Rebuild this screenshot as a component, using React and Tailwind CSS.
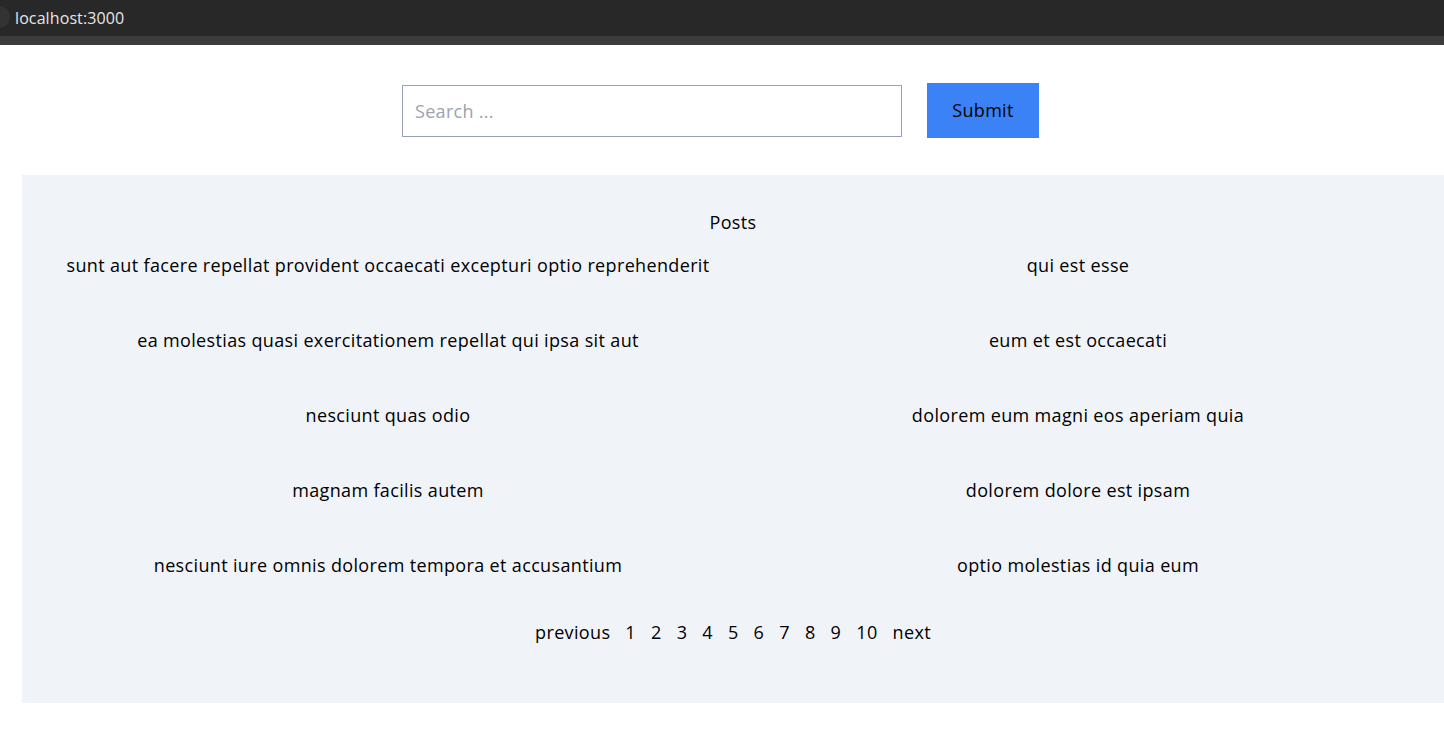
import React from "react";

const posts = [
  "sunt aut facere repellat provident occaecati excepturi optio reprehenderit",
  "qui est esse",
  "ea molestias quasi exercitationem repellat qui ipsa sit aut",
  "eum et est occaecati",
  "nesciunt quas odio",
  "dolorem eum magni eos aperiam quia",
  "magnam facilis autem",
  "dolorem dolore est ipsam",
  "nesciunt iure omnis dolorem tempora et accusantium",
  "optio molestias id quia eum",
];

export default function App() {
  return (
    <div
      className="w-[1444px] h-[742px] overflow-hidden bg-white text-black"
      style={{ fontFamily: '"Segoe UI", "Open Sans", "Noto Sans", sans-serif' }}
    >
      <div className="h-[36px] bg-[#282828] flex items-center relative">
        <div className="absolute left-[-12px] top-[6px] w-[22px] h-[22px] rounded-full bg-[#333333]" />
        <span className="ml-[15px] text-[16px] text-[#e6e6e6] tracking-[0.1px]">localhost:3000</span>
      </div>
      <div className="h-[9px] bg-[#3c3c3c]" />
      <div className="flex justify-center items-center pt-[38px] pr-[3px] gap-[25px]">
        <input
          className="w-[500px] h-[52px] border border-[#94a3b8] px-[12px] text-[18px] placeholder:text-[#9ca3af] outline-none tracking-[0.3px]"
          placeholder="Search ..."
        />
        <button className="w-[112px] h-[55px] bg-[#3b82f6] text-[18px] text-black tracking-[0.3px]">Submit</button>
      </div>
      <div className="ml-[22px] mt-[37px] w-[1422px] h-[528px] bg-[#f0f4f9] px-[21px] pt-[33px] text-[18px] leading-[28px] tracking-[0.35px]">
        <div className="text-center">Posts</div>
        <div className="grid grid-cols-2 gap-y-[47px] mt-[15px]">
          {posts.map((p, i) => (
            <div key={i} className="text-center whitespace-nowrap">{p}</div>
          ))}
        </div>
        <div className="flex justify-center gap-[15px] mt-[39px]">
          <span>previous</span>
          {[1, 2, 3, 4, 5, 6, 7, 8, 9, 10].map((n) => (
            <span key={n}>{n}</span>
          ))}
          <span>next</span>
        </div>
      </div>
    </div>
  );
}
